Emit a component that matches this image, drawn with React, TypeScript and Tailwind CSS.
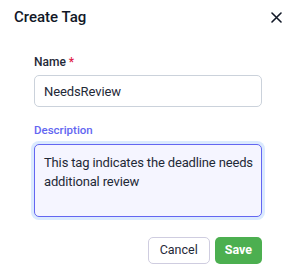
import { useState } from "react";

export default function App() {
  const [name, setName] = useState("NeedsReview");
  const [description, setDescription] = useState(
    "This tag indicates the deadline needs additional review"
  );

  return (
    <div
      className="h-[277px] w-[296px] bg-white text-[#1f2937]"
      style={{ fontFamily: 'Roboto, "Noto Sans", sans-serif' }}
    >
      <div className="flex items-center justify-between pl-[14px] pr-[8px] pt-[5px]">
        <h2 className="text-[15px] font-medium leading-[24px] text-[#111827]">Create Tag</h2>
        <button type="button" className="flex h-[24px] w-[24px] items-center justify-center text-[#111827]">
          <svg width="11" height="11" viewBox="0 0 11 11" fill="none">
            <path d="M1 1L10 10M10 1L1 10" stroke="currentColor" strokeWidth="1.6" strokeLinecap="round" />
          </svg>
        </button>
      </div>

      <div className="flex flex-col px-[34px] pt-[25px]">
        <label className="text-[12px] font-medium leading-[16px] text-[#1f2937]">
          Name <span className="text-[#e11d48]">*</span>
        </label>
        <input
          value={name}
          onChange={(e) => setName(e.target.value)}
          className="mt-[5px] h-[32px] w-full rounded-[5px] border border-[#cbd2db] px-[9px] text-[13px] tracking-[-0.1px] text-[#1f2937] outline-none"
        />

        <label className="mt-[15px] text-[11.5px] font-medium leading-[16px] text-[#6366f1]">
          Description
        </label>
        <textarea
          value={description}
          onChange={(e) => setDescription(e.target.value)}
          className="mt-[6px] h-[73px] w-full resize-none rounded-[5px] border border-[#6366f1] bg-[#f5f5ff] pb-[6px] pl-[9px] pr-[1px] pt-[8px] text-[13px] leading-[19px] tracking-[-0.15px] text-[#1f2937] outline-none ring-[3px] ring-[#dbeafe]"
        />

        <div className="mt-[20px] flex justify-end gap-[5px]">
          <button
            type="button"
            className="h-[27px] rounded-[5px] border border-[#cfcde0] bg-white px-[11px] text-[12.5px] text-[#1f2937]"
          >
            Cancel
          </button>
          <button
            type="button"
            className="h-[27px] rounded-[5px] bg-[#4caf50] px-[10px] text-[12.5px] font-bold text-white"
          >
            Save
          </button>
        </div>
      </div>
    </div>
  );
}
